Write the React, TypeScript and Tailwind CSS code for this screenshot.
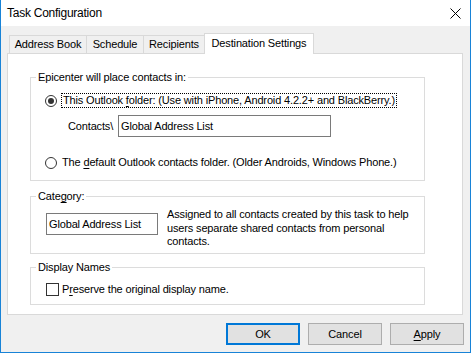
import React from "react";

function Radio({ checked }: { checked?: boolean }) {
  return (
    <span className="w-[12px] h-[12px] rounded-full border border-[#333333] bg-white flex items-center justify-center shrink-0">
      {checked && <span className="w-[6px] h-[6px] rounded-full bg-[#333333]" />}
    </span>
  );
}

function U({ children }: { children: React.ReactNode }) {
  return <span className="underline underline-offset-[2px]">{children}</span>;
}

export default function App() {
  return (
    <div className="w-[471px] h-[353px] bg-[#f0f0f0] border-x border-b border-[#1883d7] flex flex-col overflow-hidden text-[11px] leading-[13px] tracking-[-0.15px] text-black font-['Liberation_Sans',Arial,sans-serif]">
      {/* Title bar */}
      <div className="h-[26px] bg-white flex items-center justify-between pl-[6px] pr-[9px] shrink-0">
        <span className="text-[12px] tracking-[-0.25px]">Task Configuration</span>
        <svg width="11" height="11" viewBox="0 0 11 11" className="block">
          <path d="M0.5 0.5 L10.5 10.5 M10.5 0.5 L0.5 10.5" stroke="#000" strokeWidth="1" fill="none" />
        </svg>
      </div>

      {/* Tabs */}
      <div className="mt-[7px] ml-[8px] h-[20px] flex items-end shrink-0">
        <div className="w-[77px] h-[18px] border-t border-l border-[#d9d9d9] bg-[#f0f0f0] flex items-center justify-center">Address Book</div>
        <div className="w-[57px] h-[18px] border-t border-l border-[#d9d9d9] bg-[#f0f0f0] flex items-center justify-center">Schedule</div>
        <div className="w-[61px] h-[18px] border-t border-l border-[#d9d9d9] bg-[#f0f0f0] flex items-center justify-center">Recipients</div>
        <div className="relative z-10 w-[110px] h-[21px] -mb-[1px] border-t border-x border-[#d9d9d9] bg-white flex items-center justify-center pb-[1px]">Destination Settings</div>
      </div>

      {/* Panel */}
      <div className="ml-[6px] w-[456px] h-[262px] border border-[#d9d9d9] bg-white pl-[22px] pt-[17px] shrink-0">
        <fieldset className="w-[395px] h-[110px] border border-[#dcdcdc]">
          <legend className="ml-[5px] px-[2px] leading-[13px]">Epicenter will place contacts in:</legend>
          <div className="mt-[9px] h-[15px] flex items-center pl-[14px]">
            <Radio checked />
            <span className="ml-[4px] h-[15px] border border-dotted border-black block leading-[13px] pl-[1px] pr-[1px] whitespace-nowrap">
              <span>This Outlook </span>
              <U>f</U>
              <span>older: (Use with iPhone, Android 4.2.2+ and BlackBerry.)</span>
            </span>
          </div>
          <div className="mt-[7px] h-[22px] flex items-center pl-[37px]">
            <span className="w-[50px]">Contacts\</span>
            <div className="w-[213px] h-[22px] border border-[#7a7a7a] flex items-center pl-[2px]">Global Address List</div>
          </div>
          <div className="mt-[18px] h-[15px] flex items-center pl-[14px]">
            <Radio />
            <span className="ml-[5px] whitespace-nowrap">
              The <U>d</U>efault Outlook contacts folder. (Older Androids, Windows Phone.)
            </span>
          </div>
        </fieldset>

        <fieldset className="mt-[9px] w-[395px] h-[64px] border border-[#dcdcdc]">
          <legend className="ml-[5px] px-[2px] leading-[13px]">
            Cate<U>g</U>ory:
          </legend>
          <div className="flex items-start pl-[15px]">
            <div className="mt-[10px] w-[112px] h-[22px] border border-[#7a7a7a] flex items-center pl-[2px] shrink-0">Global Address List</div>
            <div className="mt-[5px] ml-[9px] leading-[13.5px] whitespace-nowrap">
              Assigned to all contacts created by this task to help
              <br />
              users separate shared contacts from personal
              <br />
              contacts.
            </div>
          </div>
        </fieldset>

        <fieldset className="mt-[7px] w-[395px] h-[44px] border border-[#dcdcdc]">
          <legend className="ml-[5px] px-[2px] leading-[13px]">Display Names</legend>
          <div className="mt-[9px] flex items-center pl-[15px]">
            <span className="w-[13px] h-[13px] border border-[#333333] bg-white shrink-0" />
            <span className="ml-[3px] whitespace-nowrap">
              P<U>r</U>eserve the original display name.
            </span>
          </div>
        </fieldset>
      </div>

      {/* Buttons */}
      <div className="mt-[8px] flex justify-end gap-[8px] pr-[6px]">
        <button className="w-[74px] h-[22px] border-2 border-[#0078d7] bg-[#e1e1e1] flex items-center justify-center">OK</button>
        <button className="w-[74px] h-[22px] border border-[#adadad] bg-[#e1e1e1] flex items-center justify-center">Cancel</button>
        <button className="w-[74px] h-[22px] border border-[#adadad] bg-[#e1e1e1] flex items-center justify-center">
          <U>A</U>pply
        </button>
      </div>
    </div>
  );
}
